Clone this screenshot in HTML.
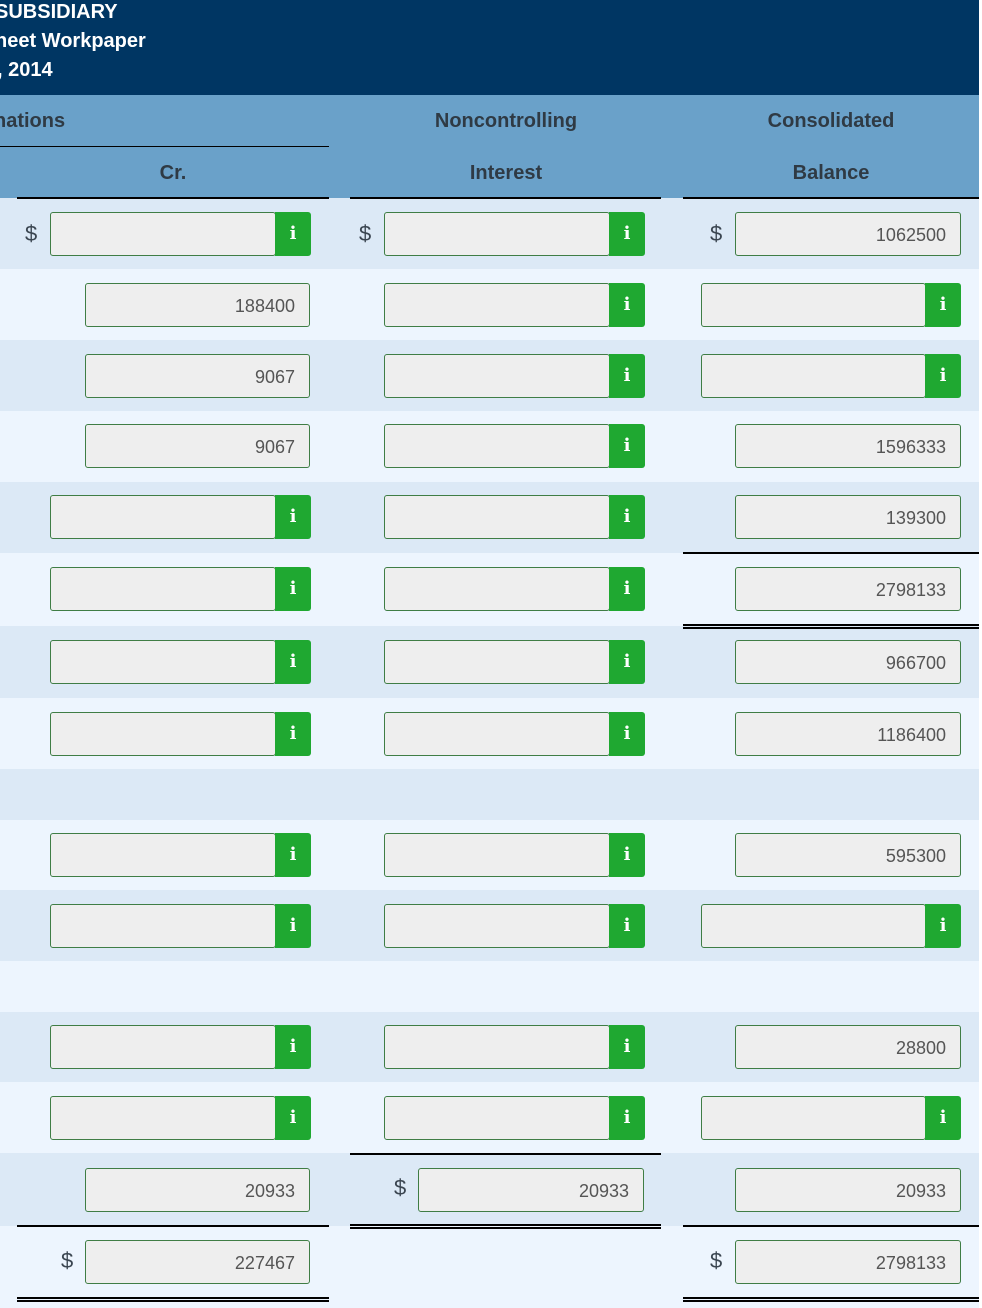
<!DOCTYPE html>
<html><head><meta charset="utf-8"><style>
*{margin:0;padding:0;box-sizing:border-box}
body{width:982px;height:1308px;position:relative;background:#fff;font-family:"Liberation Sans",sans-serif;overflow:hidden}
div{position:absolute}
.top{left:0;top:0;width:979px;height:95px;background:#003663}
.t{color:#fff;font-weight:bold;font-size:20px;left:-6px;white-space:nowrap}
.hd{left:0;top:95px;width:979px;height:103px;background:#6aa1c9}
.h{color:#2f3a44;font-weight:bold;font-size:20px;text-align:center;width:300px}
.d{background:#dce9f6;left:0;width:979px}
.l{background:#edf5fe;left:0;width:979px}
.ln{height:2px;background:#000}
.dl{height:5px;border-top:2px solid #000;border-bottom:2px solid #000}
.in{height:44px;background:#eee;border:1.5px solid #3f7d45;border-radius:3px;color:#555;font-size:18px;text-align:right;padding-right:14px;line-height:44px}
.b{width:36px;height:44px;background:#1fa831;border-radius:0 3px 3px 0;color:#fff;font:bold 18px "DejaVu Serif",serif;text-align:center;line-height:44px}
.s{font-size:22px;color:#3a4550;line-height:46px}
</style></head><body>
<div class="top"></div>
<div class="t" style="top:1px;left:-5px">SUBSIDIARY</div>
<div class="t" style="top:30px;left:-5px">heet Workpaper</div>
<div class="t" style="top:59px;left:-3px">, 2014</div>
<div class="hd"></div>
<div class="h" style="top:110px;text-align:left;width:100px;left:-6px">nations</div>
<div class="h" style="left:356px;top:110px">Noncontrolling</div>
<div class="h" style="left:681px;top:110px">Consolidated</div>
<div class="h" style="left:23px;top:162px">Cr.</div>
<div class="h" style="left:356px;top:162px">Interest</div>
<div class="h" style="left:681px;top:162px">Balance</div>
<div class="ln" style="left:0;width:329px;top:146px;height:1px"></div>

<div class="d" style="top:198px;height:71px"></div>
<div class="l" style="top:269px;height:71px"></div>
<div class="d" style="top:340px;height:71px"></div>
<div class="l" style="top:411px;height:71px"></div>
<div class="d" style="top:482px;height:71px"></div>
<div class="l" style="top:553px;height:73px"></div>
<div class="d" style="top:626px;height:72px"></div>
<div class="l" style="top:698px;height:71px"></div>
<div class="d" style="top:769px;height:51px"></div>
<div class="l" style="top:820px;height:70px"></div>
<div class="d" style="top:890px;height:71px"></div>
<div class="l" style="top:961px;height:51px"></div>
<div class="d" style="top:1012px;height:70px"></div>
<div class="l" style="top:1082px;height:71px"></div>
<div class="d" style="top:1153px;height:73px"></div>
<div class="l" style="top:1226px;height:82px"></div>

<div class="ln" style="left:17px;width:312px;top:197px;height:1.5px"></div>
<div class="ln" style="left:350px;width:311px;top:197px;height:1.5px"></div>
<div class="ln" style="left:683px;width:296px;top:197px;height:1.5px"></div>

<!-- r1 -->
<div class="s" style="left:25px;top:211px">$</div><div class="in" style="left:50px;top:212px;width:226px"></div><div class="b" style="left:275px;top:212px">i</div>
<div class="s" style="left:359px;top:211px">$</div><div class="in" style="left:384px;top:212px;width:226px"></div><div class="b" style="left:609px;top:212px">i</div>
<div class="s" style="left:710px;top:211px">$</div><div class="in" style="left:735px;top:212px;width:226px">1062500</div>
<!-- r2 -->
<div class="in" style="left:85px;top:283px;width:225px">188400</div>
<div class="in" style="left:384px;top:283px;width:226px"></div><div class="b" style="left:609px;top:283px">i</div>
<div class="in" style="left:701px;top:283px;width:225px"></div><div class="b" style="left:925px;top:283px">i</div>
<!-- r3 -->
<div class="in" style="left:85px;top:354px;width:225px">9067</div>
<div class="in" style="left:384px;top:354px;width:226px"></div><div class="b" style="left:609px;top:354px">i</div>
<div class="in" style="left:701px;top:354px;width:225px"></div><div class="b" style="left:925px;top:354px">i</div>
<!-- r4 -->
<div class="in" style="left:85px;top:424px;width:225px">9067</div>
<div class="in" style="left:384px;top:424px;width:226px"></div><div class="b" style="left:609px;top:424px">i</div>
<div class="in" style="left:735px;top:424px;width:226px">1596333</div>
<!-- r5 -->
<div class="in" style="left:50px;top:495px;width:226px"></div><div class="b" style="left:275px;top:495px">i</div>
<div class="in" style="left:384px;top:495px;width:226px"></div><div class="b" style="left:609px;top:495px">i</div>
<div class="in" style="left:735px;top:495px;width:226px">139300</div>
<div class="ln" style="left:683px;width:296px;top:552px"></div>
<!-- r6 -->
<div class="in" style="left:50px;top:567px;width:226px"></div><div class="b" style="left:275px;top:567px">i</div>
<div class="in" style="left:384px;top:567px;width:226px"></div><div class="b" style="left:609px;top:567px">i</div>
<div class="in" style="left:735px;top:567px;width:226px">2798133</div>
<div class="dl" style="left:683px;width:296px;top:624px"></div>
<!-- r7 -->
<div class="in" style="left:50px;top:640px;width:226px"></div><div class="b" style="left:275px;top:640px">i</div>
<div class="in" style="left:384px;top:640px;width:226px"></div><div class="b" style="left:609px;top:640px">i</div>
<div class="in" style="left:735px;top:640px;width:226px">966700</div>
<!-- r8 -->
<div class="in" style="left:50px;top:712px;width:226px"></div><div class="b" style="left:275px;top:712px">i</div>
<div class="in" style="left:384px;top:712px;width:226px"></div><div class="b" style="left:609px;top:712px">i</div>
<div class="in" style="left:735px;top:712px;width:226px">1186400</div>
<!-- r10 -->
<div class="in" style="left:50px;top:833px;width:226px"></div><div class="b" style="left:275px;top:833px">i</div>
<div class="in" style="left:384px;top:833px;width:226px"></div><div class="b" style="left:609px;top:833px">i</div>
<div class="in" style="left:735px;top:833px;width:226px">595300</div>
<!-- r11 -->
<div class="in" style="left:50px;top:904px;width:226px"></div><div class="b" style="left:275px;top:904px">i</div>
<div class="in" style="left:384px;top:904px;width:226px"></div><div class="b" style="left:609px;top:904px">i</div>
<div class="in" style="left:701px;top:904px;width:225px"></div><div class="b" style="left:925px;top:904px">i</div>
<!-- r13 -->
<div class="in" style="left:50px;top:1025px;width:226px"></div><div class="b" style="left:275px;top:1025px">i</div>
<div class="in" style="left:384px;top:1025px;width:226px"></div><div class="b" style="left:609px;top:1025px">i</div>
<div class="in" style="left:735px;top:1025px;width:226px">28800</div>
<!-- r14 -->
<div class="in" style="left:50px;top:1096px;width:226px"></div><div class="b" style="left:275px;top:1096px">i</div>
<div class="in" style="left:384px;top:1096px;width:226px"></div><div class="b" style="left:609px;top:1096px">i</div>
<div class="in" style="left:701px;top:1096px;width:225px"></div><div class="b" style="left:925px;top:1096px">i</div>
<!-- r15 -->
<div class="ln" style="left:350px;width:311px;top:1153px;height:1.5px"></div>
<div class="in" style="left:85px;top:1168px;width:225px">20933</div>
<div class="s" style="left:394px;top:1165px">$</div><div class="in" style="left:418px;top:1168px;width:226px">20933</div>
<div class="in" style="left:735px;top:1168px;width:226px">20933</div>
<div class="ln" style="left:17px;width:312px;top:1225px"></div>
<div class="dl" style="left:350px;width:311px;top:1224px"></div>
<div class="ln" style="left:683px;width:296px;top:1225px"></div>
<!-- r16 -->
<div class="s" style="left:61px;top:1238px">$</div><div class="in" style="left:85px;top:1240px;width:225px">227467</div>
<div class="s" style="left:710px;top:1238px">$</div><div class="in" style="left:735px;top:1240px;width:226px">2798133</div>
<div class="dl" style="left:17px;width:312px;top:1297px"></div>
<div class="dl" style="left:683px;width:296px;top:1297px"></div>
</body></html>
